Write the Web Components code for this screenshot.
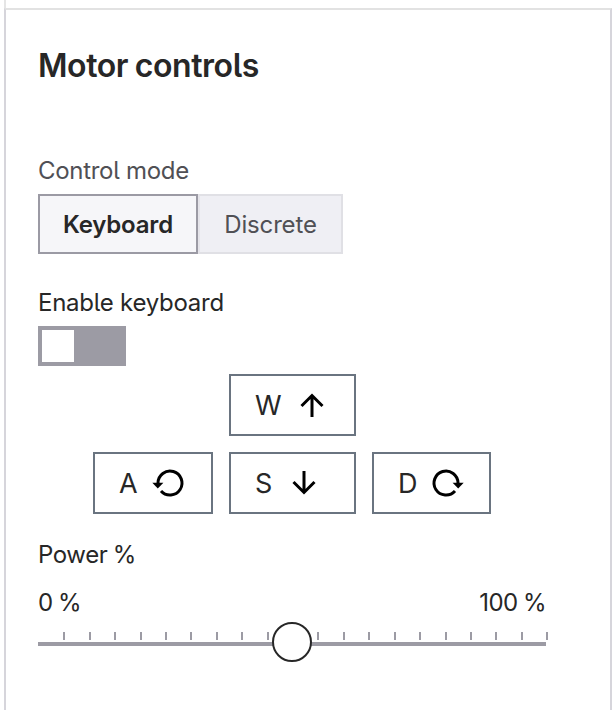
<!DOCTYPE html>
<html lang="en">
<head>
<meta charset="utf-8">
<title>Motor controls</title>
<style>
html,body{margin:0;height:100%;background:#fff;overflow:hidden}
body{font-family:Inter,"Liberation Sans",sans-serif;font-size:24px;line-height:32px;color:#272727;font-feature-settings:"cv05" 1}
</style>
</head>
<body>
<motor-panel heading="Motor controls">
  <mode-switch label="Control mode">
    <mode-option selected style="--w:160px;--ls:-.2px">Keyboard</mode-option>
    <mode-option style="--w:145px;--ls:-.15px">Discrete</mode-option>
  </mode-switch>
  <toggle-switch>Enable keyboard</toggle-switch>
  <key-pad>
    <key-button class="w" icon="up">W</key-button>
    <key-button class="a" icon="ccw">A</key-button>
    <key-button class="s" icon="down">S</key-button>
    <key-button class="d" icon="cw">D</key-button>
  </key-pad>
  <power-slider label="Power %" min="0" max="100" value="50"></power-slider>
</motor-panel>
<script>
class Base extends HTMLElement{
  connectedCallback(){
    if(!this.shadowRoot) this.attachShadow({mode:'open'}).innerHTML=this.view();
  }
}
customElements.define('motor-panel',class extends Base{
  view(){return `<style>
    :host{display:flex;flex-direction:column;height:100vh;padding-left:4px;box-sizing:border-box}
    .before{height:8px;flex:none;border-left:2px solid #e5e5e5}
    section{flex:1;border:2px solid #d6d5db;border-top-color:#e2e2e2;border-bottom:0;padding:35px 32px 0;box-sizing:border-box}
    h2{margin:0 0 68px;font-size:32px;line-height:42px;font-weight:600;letter-spacing:-.42px;word-spacing:-1px}
  </style><div class="before"></div><section><h2><span>${this.getAttribute('heading')}</span></h2><slot></slot></section>`}
});
customElements.define('mode-switch',class extends Base{
  view(){return `<style>
    :host{display:block}
    .label{color:#505055;height:39px;letter-spacing:-.3px}
    .group{display:flex}
  </style><div class="label"><span>${this.getAttribute('label')}</span></div><div class="group"><slot></slot></div>`}
});
customElements.define('mode-option',class extends Base{
  view(){return `<style>
    :host{display:flex;align-items:center;justify-content:center;box-sizing:border-box;width:var(--w);height:60px;padding-top:2px;border:2px solid #e0e0e5;border-left-color:#e5e4ea;background:#efeff4;color:#505055;letter-spacing:var(--ls)}
    :host([selected]){border-color:#9b9aa4;background:#f6f6f9;color:#272727;font-weight:600}
  </style><span><slot></slot></span>`}
});
customElements.define('toggle-switch',class extends Base{
  view(){return `<style>
    :host{display:block;margin-top:33px}
    .label{height:39px;letter-spacing:-.25px}
    .track{width:88px;height:40px;padding:4px;box-sizing:border-box;background:#9c9ba4}
    .knob{width:32px;height:32px;background:#fff}
  </style><div class="label"><span><slot></slot></span></div><div class="track"><div class="knob"></div></div>`}
});
customElements.define('key-pad',class extends Base{
  view(){return `<style>
    :host{display:grid;grid-template:62px 62px / 120px 127px 119px;grid-template-areas:". w ." "a s d";gap:16px;margin:8px 0 0 55px}
    ::slotted(.w){grid-area:w}::slotted(.a){grid-area:a}::slotted(.s){grid-area:s}::slotted(.d){grid-area:d}
  </style><slot></slot>`}
});
const ring='<path d="M7 17V16A12 12 0 1 1 10 24" fill="none" stroke="#000" stroke-width="3"/><path d="M1.3 15.8H12.4L6.8 21.5Z"/>';
const icons={
  up:'<path d="M16 28V6M5.5 17 16 6.5 26.5 17" fill="none" stroke="#000" stroke-width="3"/>',
  down:'<path d="M16 4V26M5.5 15 16 25.5 26.5 15" fill="none" stroke="#000" stroke-width="3"/>',
  ccw:`<g>${ring}</g>`,
  cw:`<g transform="matrix(-1 0 0 1 32 0)">${ring}</g>`
};
customElements.define('key-button',class extends Base{
  view(){return `<style>
    :host{display:flex;align-items:center;gap:4px;box-sizing:border-box;border:2px solid #6a7480;padding-left:24px;font-size:27px}
    span{padding-top:2px}
    svg{display:block;width:32px;height:32px;flex:none;overflow:visible}
    :host(.w) svg{margin-left:10px}
    :host(.s) svg{margin-left:12px}
    :host(.a) svg{margin-left:9px}
    :host(.d) svg{margin-left:11px}
  </style><span><slot></slot></span><svg viewBox="0 0 32 32">${icons[this.getAttribute('icon')]}</svg>`}
});
customElements.define('power-slider',class extends Base{
  view(){
    const a=n=>this.getAttribute(n);
    const ticks=[63,89,114,140,165,190,216,241,267,292,317,343,368,394,419,445,470,495,521,546].map(x=>`<rect x="${x-38}" width="2" height="8"/>`).join('');
    return `<style>
    :host{display:block;width:508px;margin-top:25px}
    .label{height:48px;letter-spacing:-.4px;word-spacing:-1px}
    .range{display:flex;justify-content:space-between;letter-spacing:-.5px;word-spacing:-1px;height:45px}
    svg{display:block;width:510px;height:8px;fill:#9c9ba4}
    .track{margin-top:2px;height:4px;background:#9c9ba4;position:relative}
    .thumb{position:absolute;left:${a('value')}%;top:50%;width:40px;height:40px;box-sizing:border-box;border:2px solid #272727;border-radius:50%;background:#fff;transform:translate(-50%,-55%)}
  </style><div class="label"><span>${a('label')}</span></div>
  <div class="range"><span>${a('min')} %</span><span>${a('max')} %</span></div>
  <svg viewBox="0 0 510 8" shape-rendering="crispEdges">${ticks}</svg>
  <div class="track"><div class="thumb"></div></div>`}
});
</script>
</body>
</html>
